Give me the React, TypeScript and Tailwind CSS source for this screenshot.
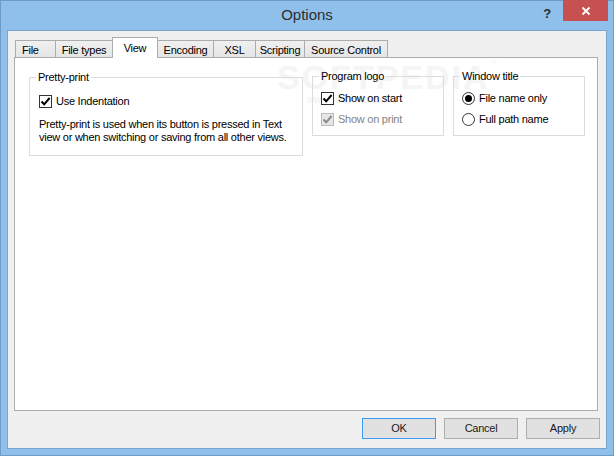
import React from "react";

const font = "font-['Liberation_Sans',Arial,sans-serif]";

type Tab = { label: string; w: string; active?: boolean };

const tabs: Tab[] = [
  { label: "File", w: "w-[41px]" },
  { label: "File types", w: "w-[58px]" },
  { label: "View", w: "w-[46px]", active: true },
  { label: "Encoding", w: "w-[57px]" },
  { label: "XSL", w: "w-[43px]" },
  { label: "Scripting", w: "w-[50px]" },
  { label: "Source Control", w: "w-[84px]" },
];

const CheckBox: React.FC<{ disabled?: boolean }> = ({ disabled }) => (
  <span
    className={
      "w-[13px] h-[13px] border flex items-center justify-center shrink-0 " +
      (disabled ? "border-[#bcbcbc] bg-[#e6e6e6]" : "border-[#333333] bg-white")
    }
  >
    <svg width="11" height="11" viewBox="0 0 11 11">
      <path
        d="M1.5 5.5 L4.2 8.3 L9.6 2"
        fill="none"
        stroke={disabled ? "#8b8b8b" : "#000000"}
        strokeWidth="2"
      />
    </svg>
  </span>
);

const Radio: React.FC<{ checked?: boolean }> = ({ checked }) => (
  <span className="w-[13px] h-[13px] rounded-full border border-[#333333] bg-white flex items-center justify-center shrink-0">
    {checked && <span className="w-[7px] h-[7px] rounded-full bg-black" />}
  </span>
);

const Group: React.FC<{ title: string; cls: string; children: React.ReactNode }> = ({
  title,
  cls,
  children,
}) => (
  <fieldset className={"border border-[#dcdcdc] " + cls}>
    <legend className="ml-[6px] px-[2px] leading-[13px]">{title}</legend>
    {children}
  </fieldset>
);

const Button: React.FC<{ label: string; primary?: boolean }> = ({ label, primary }) => (
  <button
    className={
      "w-[74px] h-[21px] bg-[#e1e1e1] border text-[#1a1a1a] " +
      (primary ? "border-[#3c9bfa]" : "border-[#adadad]")
    }
  >
    {label}
  </button>
);

export default function App() {
  return (
    <div
      className={
        "w-[614px] h-[456px] bg-[#8fc0ec] border border-[#6f9bc6] flex flex-col text-[11px] tracking-[-0.25px] text-black " +
        font
      }
    >
      {/* title bar */}
      <div className="h-[29px] flex items-start shrink-0">
        <div className="flex-1" />
        <div className="pt-[3px] text-[15px] tracking-normal text-[#2e2e2e]">Options</div>
        <div className="flex-1 flex justify-end items-start">
          <span className="mt-[3px] mr-[12px] text-[13px] font-bold text-[#2b2b2b]">?</span>
          <div className="-mt-px mr-[5px] w-[45px] h-[21px] bg-[#c75050] flex items-center justify-center">
            <svg width="10" height="10" viewBox="0 0 10 10">
              <path d="M1.5 1.5 L8.5 8.5 M8.5 1.5 L1.5 8.5" stroke="#ffffff" strokeWidth="1.8" />
            </svg>
          </div>
        </div>
      </div>

      {/* client area */}
      <div className="flex-1 mx-[6px] mb-[6px] border border-[#79a4cd] bg-[#f0f0f0] flex flex-col">
        <div className="h-[20px] mt-[6px] ml-[6px] pl-[1px] flex items-end">
          {tabs.map((t, i) =>
            t.active ? (
              <div
                key={t.label}
                className={
                  t.w +
                  " -ml-px h-[21px] -mb-px relative z-10 bg-white border-l border-t border-r border-[#acacac] flex justify-center pt-[2px]"
                }
              >
                {t.label}
              </div>
            ) : (
              <div
                key={t.label}
                className={
                  t.w +
                  (i === 0 ? " pl-[6px]" : " -ml-px justify-center") +
                  " h-[17px] pt-[2px] bg-gradient-to-b from-[#f0f0f0] to-[#e5e5e5] border-l border-t border-r border-[#acacac] flex items-center"
                }
              >
                {t.label}
              </div>
            )
          )}
        </div>

        <div className="ml-[6px] mr-[8px] h-[354px] bg-white border border-[#acacac] relative">
          {/* watermark */}
          <div className="absolute left-[262px] top-[2px] text-[34px] font-bold tracking-[2px] text-[#f5f5f5] leading-none pointer-events-none">
            SOFTPEDIA<span className="text-[8px] align-top">™</span>
          </div>
          <div className="absolute left-[292px] top-[34px] text-[10px] text-[#f0f0f0] pointer-events-none">
            www.softpedia.com
          </div>

          <div className="pl-[14px] pt-[12px] flex items-start gap-[9px] relative">
            <Group title="Pretty-print" cls="w-[274px] h-[85px] mt-[1px]">
              <div className="pl-[9px] pt-[11px]">
                <div className="flex items-center gap-[4px] h-[13px]">
                  <CheckBox />
                  <span>Use Indentation</span>
                </div>
                <div className="mt-[10px] leading-[13px]">
                  Pretty-print is used when its button is pressed in Text
                  <br />
                  view or when switching or saving from all other views.
                </div>
              </div>
            </Group>

            <Group title="Program logo" cls="w-[132px] h-[66px]">
              <div className="pl-[8px] pt-[9px] flex flex-col gap-[8px]">
                <div className="flex items-center gap-[4px] h-[13px]">
                  <CheckBox />
                  <span>Show on start</span>
                </div>
                <div className="flex items-center gap-[4px] h-[13px] text-[#838383]">
                  <CheckBox disabled />
                  <span>Show on print</span>
                </div>
              </div>
            </Group>

            <Group title="Window title" cls="w-[132px] h-[66px]">
              <div className="pl-[8px] pt-[9px] flex flex-col gap-[8px]">
                <div className="flex items-center gap-[4px] h-[13px]">
                  <Radio checked />
                  <span>File name only</span>
                </div>
                <div className="flex items-center gap-[4px] h-[13px]">
                  <Radio />
                  <span>Full path name</span>
                </div>
              </div>
            </Group>
          </div>
        </div>

        <div className="mt-[7px] mr-[6px] flex justify-end gap-[8px]">
          <Button label="OK" primary />
          <Button label="Cancel" />
          <Button label="Apply" />
        </div>
      </div>
    </div>
  );
}
